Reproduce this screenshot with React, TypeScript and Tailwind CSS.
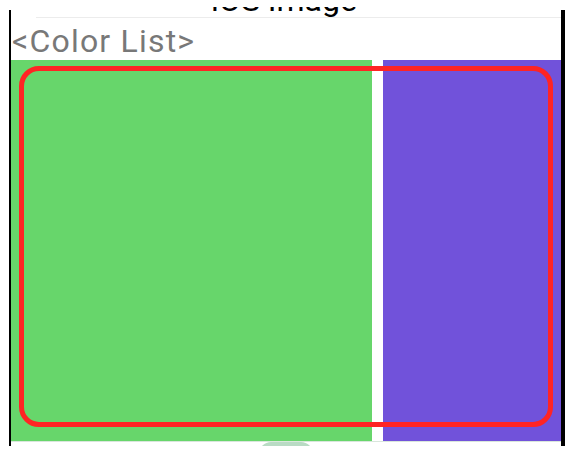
import * as React from 'react';

const roboto = { fontFamily: 'Roboto, "Noto Sans", sans-serif' };

function ColorList() {
  return (
    <div className="flex h-[382px] border-b border-[#d9e6dc]">
      <div className="w-[361px] bg-[#67d66b]" />
      <div className="w-[11px] bg-white" />
      <div className="flex-1 bg-[#7152da]" />
    </div>
  );
}

export default function App() {
  return (
    <div className="relative w-[574px] h-[464px] bg-white overflow-hidden" style={roboto}>
      {/* scroll viewport: content above y=7 is hidden */}
      <div className="mt-[7px] h-[450px] overflow-hidden">
        <div className="mt-[3px] ml-[9px] w-[556px] h-[436px] border-l-2 border-r-4 border-black flex flex-col">
          <div className="h-[8px] ml-[25px] pr-[29px] border-b border-[#ececec] flex justify-center items-end">
            <span className="text-[32px] leading-[32px] mb-[1px] text-black whitespace-nowrap">iOS Image</span>
          </div>
          <div className="h-[42px] pt-[4px] pl-[1px] text-[32px] leading-[38px] tracking-[1.2px] text-[#787878] whitespace-nowrap">
            &lt;Color List&gt;
          </div>
          <ColorList />
          <div className="flex-1 overflow-hidden flex justify-center">
            <div className="w-[54px] h-[24px] rounded-full bg-[#b9dbc4] shrink-0" />
          </div>
        </div>
      </div>
      {/* highlight box */}
      <div className="absolute left-[19px] top-[66px] w-[534px] h-[361px] border-[5px] border-[#ff2424] rounded-[20px]" />
    </div>
  );
}
